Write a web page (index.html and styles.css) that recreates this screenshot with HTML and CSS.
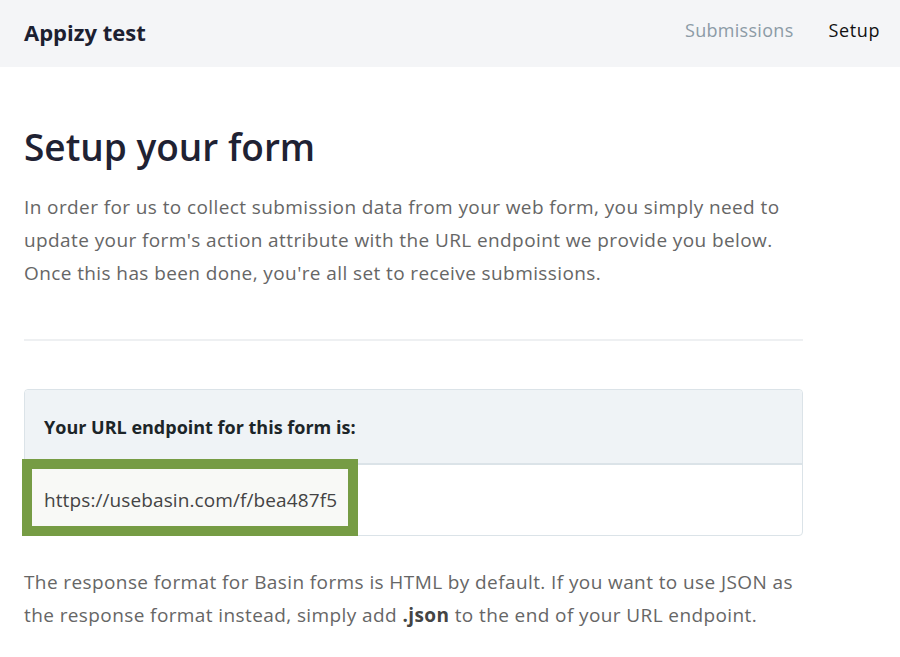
FILE: index.html
```html
<!DOCTYPE html>
<html>
<head>
<meta charset="utf-8">
<link rel="stylesheet" href="styles.css">
</head>
<body>
<header class="topbar">
  <div class="brand">Appizy test</div>
  <nav class="nav">
    <a class="nav-link">Submissions</a>
    <a class="nav-link active">Setup</a>
  </nav>
</header>
<main class="content">
  <h1 class="title">Setup your form</h1>
  <p class="lead">In order for us to collect submission data from your web form, you simply need to update your form's action attribute with the URL endpoint we provide you below. Once this has been done, you're all set to receive submissions.</p>
  <hr class="divider">
  <section class="card">
    <div class="card-head">Your URL endpoint for this form is:</div>
    <div class="card-body">
      <span class="url">https://usebasin.com/f/bea487f5</span>
      <span class="highlight"></span>
    </div>
  </section>
  <p class="lead note">The response format for Basin forms is HTML by default. If you want to use JSON as the response format instead, simply add <b>.json</b> to the end of your URL endpoint.</p>
</main>
</body>
</html>
```
FILE: styles.css
```css
* { box-sizing: border-box; }
html, body { margin: 0; padding: 0; background: #fff; }
body { font-family: "Open Sans", "Liberation Sans", sans-serif; color: #666; overflow: hidden; }

.topbar {
  height: 67px;
  background: #f4f5f7;
  display: flex;
  align-items: center;
  justify-content: space-between;
  padding: 0 20px 4px 24px;
}
.brand { font-size: 22px; font-weight: 700; color: #1c2030; }
.nav { display: flex; gap: 35px; margin-bottom: 3px; }
.nav-link { font-size: 18px; color: #8c9ba6; letter-spacing: 0.3px; }
.nav-link.active { color: #111; letter-spacing: 0.6px; }

.content { padding: 0 24px; width: 827px; }
.title {
  margin: 56px 0 0;
  font-size: 37px;
  font-weight: 600;
  color: #1f2233;
  line-height: 48px;
}
.lead {
  margin: 20px 0 0;
  font-size: 19px;
  line-height: 33px;
  letter-spacing: 0.4px;
  color: #666;
}
.divider { margin: 49px 0 0; border: 0; border-top: 2px solid #eef0f2; height: 0; }
.card {
  margin-top: 48px;
  border: 1px solid #dbe3e8;
  border-radius: 4px;
}
.card-head {
  height: 75px;
  background: #eff3f6;
  border-bottom: 2px solid #dbe3e8;
  display: flex;
  align-items: center;
  padding-left: 19px;
  font-size: 18px;
  font-weight: 700;
  color: #1c2528;
  border-radius: 4px 4px 0 0;
}
.card-body {
  position: relative;
  height: 70px;
  display: flex;
  align-items: center;
  padding-left: 19px;
}
.url { font-size: 19px; letter-spacing: 0.1px; color: #444; position: relative; z-index: 1; }
.highlight {
  position: absolute;
  left: -3px;
  top: -6px;
  width: 336px;
  height: 77px;
  border: 10px solid #769c44;
  background: #f8f9f6;
}
.note { margin-top: 30px; }
.note b { color: #444; }
```
